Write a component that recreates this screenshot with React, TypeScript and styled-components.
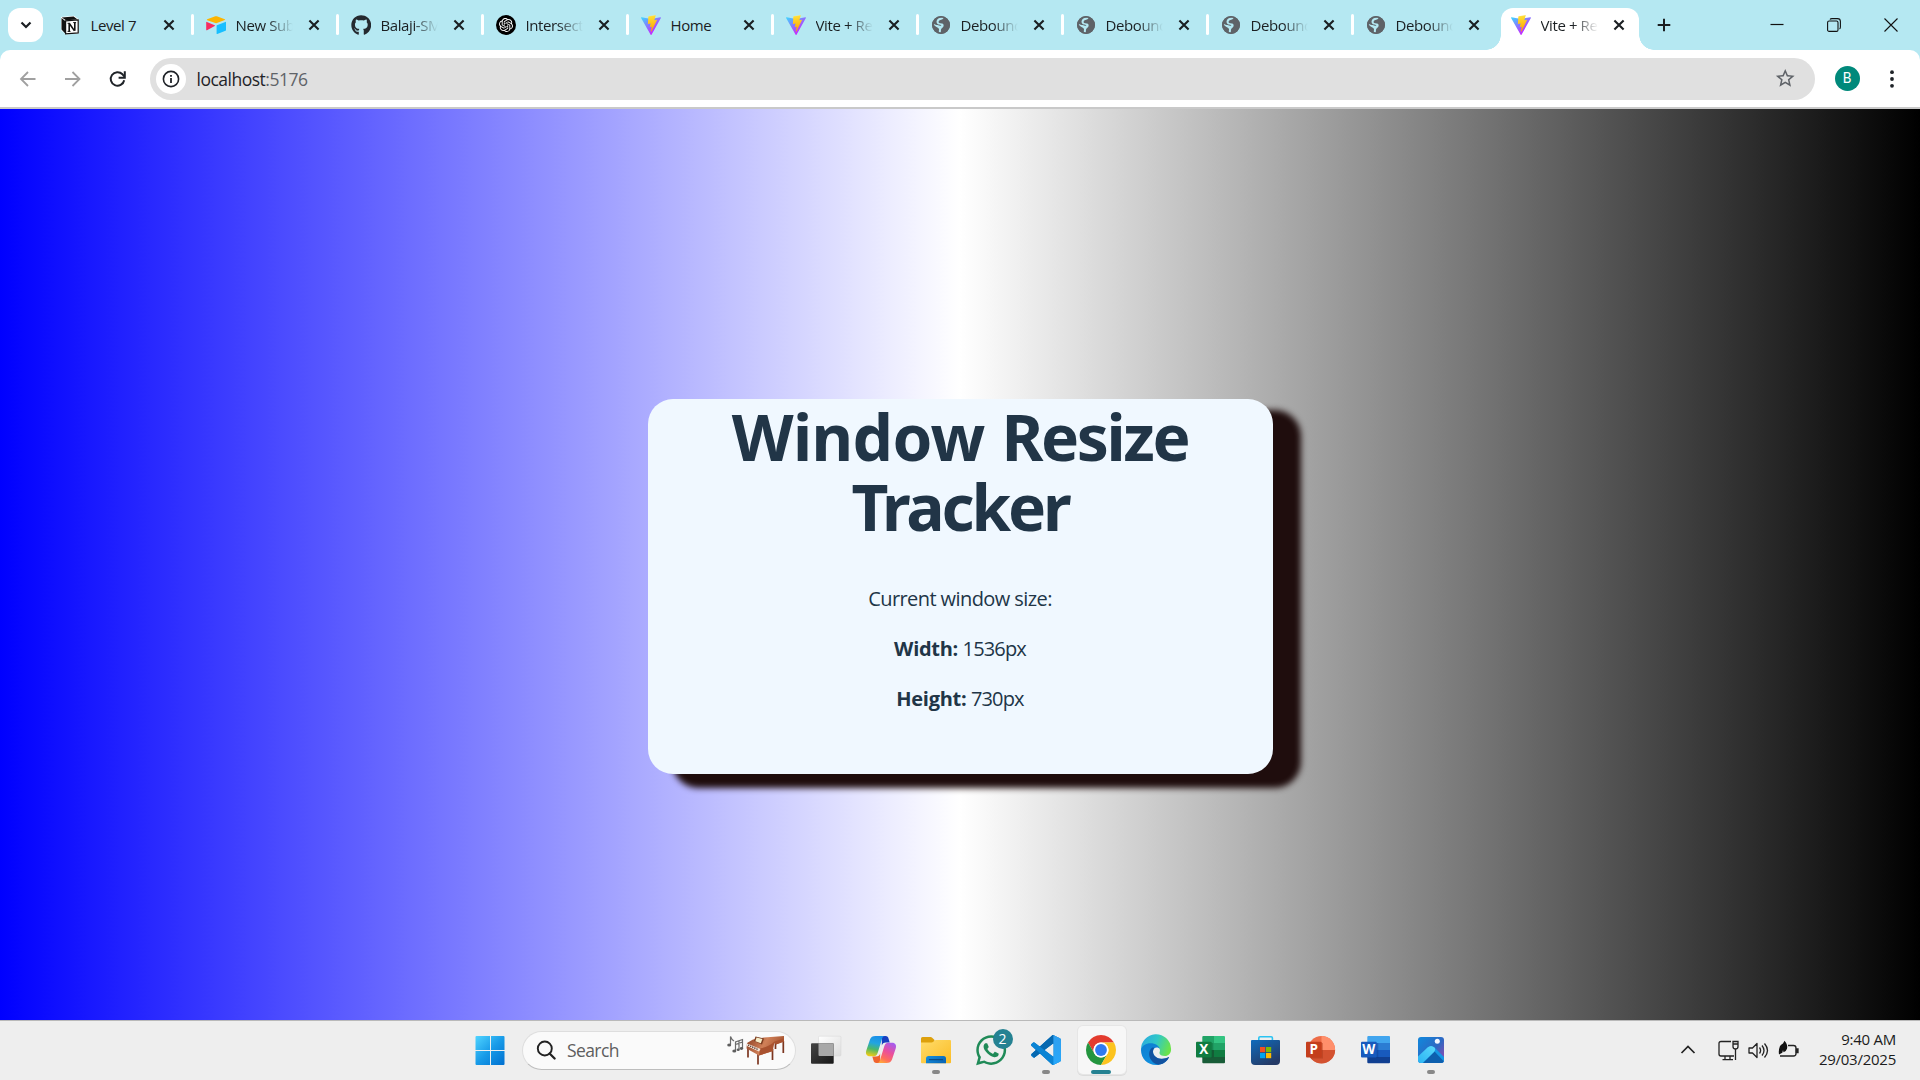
import React, { useId } from "react";
import styled, { createGlobalStyle, css } from "styled-components";
import { FaGithub, FaWhatsapp } from "react-icons/fa";
import { SiOpenai } from "react-icons/si";
import { MdStarBorder } from "react-icons/md";

const GlobalStyle = createGlobalStyle`
  *, *::before, *::after { box-sizing: border-box; }
  html, body { margin: 0; padding: 0; overflow: hidden; }
  body { font-family: "Open Sans", "Noto Sans", sans-serif; }
  svg { display: block; flex: none; }
`;

const Screen = styled.div`
  width: 1920px;
  height: 1080px;
  display: flex;
  flex-direction: column;
  overflow: hidden;
  background: #b5e8f2;
`;

/* ---------- Tab strip ---------- */

const TabStrip = styled.header`
  height: 50px;
  flex: none;
  display: flex;
  align-items: stretch;
  padding-left: 8px;
  background: #b5e8f2;
`;

const TabSearch = styled.button`
  width: 35px;
  height: 34px;
  margin: 8px 3px 0 0;
  padding: 0;
  border: 0;
  border-radius: 12px;
  background: #fff;
  display: grid;
  place-items: center;
`;

const Tab = styled.div<{ $active?: boolean; $first?: boolean }>`
  position: relative;
  z-index: 0;
  width: 145px;
  height: 50px;
  display: flex;
  align-items: center;
  padding-left: 14.5px;

  ${(p) =>
    !p.$active &&
    !p.$first &&
    css`
      &::before {
        content: "";
        position: absolute;
        left: 0;
        top: 14px;
        width: 2.5px;
        height: 21px;
        border-radius: 2px;
        background: #fff;
      }
    `}

  ${(p) =>
    p.$active &&
    css`
      &::before {
        content: "";
        position: absolute;
        z-index: -1;
        left: 5px;
        top: 7.5px;
        width: 138px;
        height: 43px;
        border-radius: 12px 12px 0 0;
        background: #fff;
      }
      &::after {
        content: "";
        position: absolute;
        z-index: -1;
        left: -10px;
        bottom: 0;
        width: 168px;
        height: 15px;
        background:
          radial-gradient(circle at 0 0, transparent 14.5px, #fff 15px) left / 15px 15px no-repeat,
          radial-gradient(circle at 15px 0, transparent 14.5px, #fff 15px) right / 15px 15px no-repeat;
      }
    `}
`;

const TabIcon = styled.span<{ $first?: boolean }>`
  width: 20px;
  height: 20px;
  margin-left: ${(p) => (p.$first ? -1 : 0)}px;
  margin-right: ${(p) => (p.$first ? 1 : 0)}px;
  display: grid;
  place-items: center;
`;

const TabTitle = styled.span<{ $fade?: boolean }>`
  width: 58px;
  margin-left: 10px;
  overflow: hidden;
  white-space: nowrap;
  font-size: 15px;
  line-height: 22px;
  letter-spacing: -0.4px;
  color: #1b2023;
  ${(p) => p.$fade && css`mask-image: linear-gradient(to right, #000 32px, transparent 57px);`}
`;

const TabClose = styled.button`
  width: 20px;
  height: 20px;
  margin-left: 10px;
  padding: 0;
  border: 0;
  background: none;
  display: grid;
  place-items: center;
`;

const NewTab = styled(TabClose)`
  width: 46px;
  height: 50px;
  margin-left: 0;
`;

const WindowControls = styled.div`
  margin-left: auto;
  padding-right: 1px;
  display: flex;
`;

const WindowButton = styled(TabClose)`
  width: 57px;
  height: 49px;
  margin-left: 0;
`;

/* ---------- Toolbar ---------- */

const Toolbar = styled.nav`
  height: 59px;
  flex: none;
  display: flex;
  align-items: center;
  padding: 0 5px;
  background: #fff;
  border-bottom: 2px solid #c9c9c9;
  border-radius: 10px 10px 0 0;
`;

const ToolButton = styled.button`
  width: 45px;
  height: 42px;
  padding: 0;
  border: 0;
  background: none;
  display: grid;
  place-items: center;
`;

const MenuButton = styled(ToolButton)`
  margin-left: 10px;
`;

const Omnibox = styled.div`
  width: 1665px;
  height: 42px;
  margin-left: 10px;
  padding: 0 18.5px 0 6px;
  border-radius: 21px;
  background: #e0e0e0;
  display: flex;
  align-items: center;
`;

const SiteInfo = styled.span`
  width: 30px;
  height: 30px;
  border-radius: 50%;
  background: #fff;
  display: grid;
  place-items: center;
`;

const Address = styled.span`
  margin-left: 10.5px;
  flex: 1;
  font-size: 17.5px;
  line-height: 26px;
  letter-spacing: -0.5px;
  color: #1f2328;
`;

const Port = styled.span`
  color: #5f6368;
`;

const Avatar = styled.span`
  width: 25px;
  height: 25px;
  margin-left: 19.5px;
  border-radius: 50%;
  background: #00897b;
  color: #fff;
  font: 14px/25px Roboto, sans-serif;
  text-align: center;
`;

/* ---------- Page ---------- */

const Page = styled.main`
  flex: 1;
  display: flex;
  justify-content: center;
  align-items: flex-start;
  padding-top: 290px;
  background: linear-gradient(to right, blue, white, black);
`;

const Card = styled.section`
  width: 625px;
  height: 375px;
  border-radius: 25px;
  background: aliceblue;
  box-shadow: 26px 12.5px 6.25px 1.25px #1f0d0d;
  color: #213547;
  text-align: center;
`;

const Heading = styled.h1`
  width: 500px;
  margin: 3px auto 0;
  font: bold 64px/70px "Noto Sans", "Open Sans", sans-serif;
`;

const Word = styled.span<{ $tracking: number }>`
  letter-spacing: ${(p) => p.$tracking}px;
`;

const Details = styled.div`
  padding-top: 42px;
`;

const Line = styled.p`
  margin: 0 0 20px;
  font-size: 20px;
  line-height: 30px;
  letter-spacing: -0.58px;
`;

const Label = styled.strong`
  letter-spacing: -0.3px;
`;

const Value = styled.span`
  letter-spacing: -0.85px;
`;

/* ---------- Taskbar ---------- */

const Taskbar = styled.footer`
  height: 60px;
  flex: none;
  display: flex;
  align-items: center;
  padding: 0 24px 1px 462px;
  border-top: 1px solid #b9b9b9;
  background: #eeeeee;
`;

const TaskCell = styled.div<{ $active?: boolean; $running?: boolean }>`
  position: relative;
  z-index: 0;
  width: 55px;
  height: 58px;
  display: grid;
  place-items: center;

  ${(p) =>
    p.$active &&
    css`
      &::before {
        content: "";
        position: absolute;
        z-index: -1;
        inset: 5px 3px 5px 4px;
        border-radius: 5px;
        background: #f7f7f7;
        box-shadow: 0 0 0 1px #e6e6e6, 0 1px 0 1px #dcdcdc;
      }
    `}

  ${(p) =>
    (p.$active || p.$running) &&
    css`
      &::after {
        content: "";
        position: absolute;
        bottom: 5px;
        left: 50%;
        width: ${p.$active ? 20 : 8}px;
        height: 4px;
        transform: translateX(-50%);
        border-radius: 2px;
        background: ${p.$active ? "#258292" : "#888"};
      }
    `}
`;

const Badge = styled.span`
  position: absolute;
  left: 29px;
  top: 8px;
  width: 20px;
  height: 20px;
  border-radius: 50%;
  background: #258292;
  color: #fff;
  font-size: 14px;
  line-height: 20px;
  text-align: center;
`;

const SearchBox = styled.div`
  width: 274px;
  height: 39px;
  margin: 0 2.500px 0 5px;
  padding: 0 9px 0 13px;
  display: flex;
  align-items: center;
  border: 1px solid #dedede;
  border-bottom-color: #bdbdbd;
  border-radius: 20px;
  background: #fafafa;
`;

const SearchText = styled.span`
  flex: 1;
  margin-left: 11px;
  font-size: 17.5px;
  line-height: 26px;
  letter-spacing: -0.6px;
  color: #5e5e5e;
`;

const Tray = styled.div`
  margin-left: auto;
  display: flex;
  align-items: center;
`;

const TrayIcons = styled.div`
  display: flex;
  gap: 9px;
  margin: 0 20px 0 22px;
`;

const Clock = styled.div`
  padding-bottom: 3px;
  text-align: right;
  font-size: 15px;
  line-height: 20px;
  letter-spacing: -0.25px;
  color: #1c1c1c;
  white-space: nowrap;
`;

/* ---------- Favicons ---------- */

const NotionIcon = () => (
  <svg width="20" height="20" viewBox="0 0 20 20">
    <path d="M1 2 14 .7l5 3.700v14L6 19.600 1 15z" fill="#fff" />
    <path d="M1.800 2.600 13.600 1.400l4 3L6 5.300zM1.500 3l3.700 3v12.500L1.500 14.600z" fill="#111" />
    <path d="M5.600 5.900 18.200 5v12.900L5.600 18.800z" fill="#fff" stroke="#111" strokeWidth="1.200" />
    <path d="M9.200 8.200v8.200M9.200 8.300l5.300 7.600M14.800 15.800V7.600" fill="none" stroke="#111" strokeWidth="1.600" />
    <path d="M7.600 8.300h2.200M7.600 16.400h2.900M13.200 7.600h2.900" stroke="#111" strokeWidth="1" />
  </svg>
);

const AirtableIcon = () => (
  <svg width="20" height="20" viewBox="0 0 20 20">
    <path d="M1.200 4.300 9.300 1.300q.8-.3 1.600 0l7.900 2.900q.8.500 0 .9l-7.900 3q-.8.300-1.600 0L1.200 5.200q-.8-.4 0-.9z" fill="#fcb400" />
    <path d="M10.900 10.200 19.300 6.900q.7-.2.700.5v7.700q0 .5-.5.700l-8.200 3.200q-.7.200-.7-.5v-7.600q0-.5.300-.7z" fill="#18bfff" />
    <path d="M.2 7.400q0-.7.700-.5l7.800 3.400q.6.400 0 .8L1 15.200q-.8.300-.8-.5z" fill="#f82b60" />
  </svg>
);

const ViteIcon = () => {
  const id = useId();
  return (
    <svg width="20" height="20" viewBox="0 0 256 257">
      <defs>
        <linearGradient id={`${id}v`} x1="0" x2="0.576" y1="0.07" y2="0.82">
          <stop offset="0" stopColor="#41d1ff" />
          <stop offset="1" stopColor="#bd34fe" />
        </linearGradient>
        <linearGradient id={`${id}b`} x1="0.43" x2="0.5" y1="0.02" y2="0.89">
          <stop offset="0" stopColor="#ffea83" />
          <stop offset="0.083" stopColor="#ffdd35" />
          <stop offset="1" stopColor="#ffa800" />
        </linearGradient>
      </defs>
      <path fill={`url(#${id}v)`} d="M255.153 37.938L134.897 252.976c-2.483 4.44-8.862 4.466-11.382.048L.875 37.958c-2.746-4.814 1.371-10.646 6.827-9.67l120.385 21.517a6.537 6.537 0 0 0 2.322-.004l117.867-21.483c5.438-.991 9.574 4.796 6.877 9.62Z" />
      <path fill={`url(#${id}b)`} d="M185.432.063L96.44 17.501a3.268 3.268 0 0 0-2.634 3.014l-5.474 92.456a3.268 3.268 0 0 0 3.997 3.378l24.777-5.718c2.318-.535 4.413 1.507 3.936 3.838l-7.361 36.047c-.495 2.426 1.782 4.5 4.151 3.78l15.304-4.649c2.372-.72 4.652 1.36 4.15 3.788l-11.698 56.621c-.732 3.542 3.979 5.473 5.943 2.437l1.313-2.028l72.516-144.72c1.215-2.423-.88-5.186-3.54-4.672l-25.505 4.922c-2.396.462-4.435-1.77-3.759-4.114l16.646-57.705c.677-2.35-1.37-4.583-3.769-4.113Z" />
    </svg>
  );
};

const OpenAIIcon = () => (
  <svg width="20" height="20" viewBox="0 0 20 20">
    <circle cx="10" cy="10" r="10" fill="#000" />
    <SiOpenai x="3" y="3" size={14} color="#fff" />
  </svg>
);

const GlobeIcon = () => (
  <svg width="20" height="20" viewBox="0 0 20 20">
    <circle cx="10" cy="10" r="9" fill="#5f6368" />
    <path
      d="M12.500 2.600C12.500 4.800 9.500 4.600 8.300 5.600 7 6.700 7.400 8.300 9.300 8.300 11.500 8.300 13 9 12.600 11 12.300 12.800 10.500 12.600 10 14.500L9.800 17.500 8 17.300C7.300 15.500 8.800 14.500 7.500 13.200 6.300 12.300 4 11.500 2.500 9.300 3.500 9 5 10 6.500 10 8 10 9.500 11.500 10.300 10.500 10.500 9.700 8 10 6.500 9 5 7.800 5.200 5 7.300 3.600 8.800 2.600 10.800 2.200 12.500 2.600z"
      fill="#b5e8f2"
    />
    <circle cx="10" cy="10" r="8.200" fill="none" stroke="#5f6368" strokeWidth="1.600" />
  </svg>
);
const GithubIcon = () => <FaGithub size={20.5} color="#24292f" />;

/* ---------- Browser glyphs ---------- */

const Cross = () => (
  <svg width="20" height="20" viewBox="0 0 20 20">
    <path d="M5.400 5.400l9.200 9.200M14.600 5.400l-9.200 9.200" stroke="#1b1f22" strokeWidth="2.100" />
  </svg>
);

const BackArrow = ({ flip = false }: { flip?: boolean }) => (
  <svg width="20" height="20" viewBox="0 0 20 20">
    <path
      d={flip ? "M2 10h14M9.500 3l7 7-7 7" : "M17.500 10h-14M10 3l-7 7 7 7"}
      fill="none"
      stroke="#a0a0a0"
      strokeWidth="1.800"
    />
  </svg>
);

const ReloadIcon = () => (
  <svg width="20" height="20" viewBox="0 0 20 20">
    <path d="M16.200 11.300A6.800 6.800 0 1 1 14.500 5.300L16.500 7.600" fill="none" stroke="#1f2328" strokeWidth="2" />
    <path d="M16.800 2.300v6.400h-6.200" fill="none" stroke="#1f2328" strokeWidth="2" />
  </svg>
);

const InfoIcon = () => (
  <svg width="20" height="20" viewBox="0 0 20 20">
    <circle cx="10" cy="10" r="7.600" fill="none" stroke="#1f2328" strokeWidth="1.600" />
    <path d="M10 9v5M10 6v1.800" stroke="#1f2328" strokeWidth="1.800" />
  </svg>
);

/* ---------- Taskbar icons ---------- */

const StartIcon = () => (
  <svg width="32" height="32" viewBox="0 0 32 32">
    <defs>
      <linearGradient id="start" gradientUnits="userSpaceOnUse" x1="2" y1="2" x2="30" y2="31">
        <stop offset="0" stopColor="#4fd3ff" />
        <stop offset="0.500" stopColor="#189be8" />
        <stop offset="1" stopColor="#0070d0" />
      </linearGradient>
    </defs>
    <path d="M2.500 2H16v14H1.500V3q0-1 1-1zM17 2h12.500q1 0 1 1v13H17zM1.500 17H16v14H2.500q-1 0-1-1zM17 17h13.500v13q0 1-1 1H17z" fill="url(#start)" />
  </svg>
);

const Magnifier = () => (
  <svg width="20" height="20" viewBox="0 0 20 20">
    <circle cx="8.800" cy="8.500" r="7" fill="none" stroke="#222" strokeWidth="1.900" />
    <path d="M13.600 13.500l5 5" stroke="#222" strokeWidth="2.300" strokeLinecap="round" />
  </svg>
);

const PianoArt = () => (
  <svg width="60" height="32" viewBox="0 0 60 32">
    <defs>
      <linearGradient id="wood" x1="0" y1="0" x2="1" y2="0.300">
        <stop offset="0" stopColor="#8a3d22" />
        <stop offset="0.550" stopColor="#d08058" />
        <stop offset="1" stopColor="#a5532f" />
      </linearGradient>
    </defs>
    <path d="M4.500 10.500V2.500q1 3 3.500 4.500M9.500 16.500V8l7-2.500v9M9.500 10.500l7-2.500M13 15.500V7" fill="none" stroke="#6b6b6b" strokeWidth="1.200" />
    <g fill="#5d5d5d">
      <ellipse cx="3.200" cy="11" rx="2" ry="1.600" />
      <ellipse cx="8.300" cy="17" rx="2" ry="1.600" />
      <ellipse cx="12.200" cy="15.800" rx="1.600" ry="1.300" />
      <ellipse cx="15.500" cy="14.500" rx="1.700" ry="1.400" />
    </g>
    <path d="M22 13v10.500M32 20v10.500M46.500 15v11M57.300 7v12M49.500 9v6" stroke="#7c3620" strokeWidth="1.700" />
    <path d="M21 9 27 5.500 38 3.500 58 2v5.500L50 10.500l-1-2q-2 2-2 8.500L33 21.500 20.500 14.500z" fill="url(#wood)" />
    <path d="M34 14.500Q43 13 48.500 7.500L58 4.500V7.500L50 10.500l-1-2q-2 2-2 8.500L33 21.500z" fill="#a9522f" />
    <path d="M21 9.500 34.500 15l-1.500 2.500-12-5.500z" fill="#f3e7dc" />
    <path d="M22 11l10.500 4.800" stroke="#40251c" strokeWidth="1.200" strokeDasharray="1.300 1" />
    <path d="M29.500 2.500 38 4.500l-2 6-8-3.500z" fill="#7a3b1f" />
    <path d="M30.500 3.500l5.900 1.500-1.600 4.200-5.400-2z" fill="#f7edc8" />
  </svg>
);

const TaskViewIcon = () => (
  <svg width="32" height="32" viewBox="0 0 32 32">
    <defs>
      <linearGradient id="tvd" x1="0" y1="0" x2="1" y2="1">
        <stop offset="0" stopColor="#454545" />
        <stop offset="1" stopColor="#171717" />
      </linearGradient>
      <linearGradient id="tvl" x1="0" y1="0" x2="1" y2="1">
        <stop offset="0" stopColor="#fff" />
        <stop offset="1" stopColor="#dcdcdc" />
      </linearGradient>
    </defs>
    <rect x="8.500" y="2.200" width="22.500" height="19.800" rx="1" fill="url(#tvl)" stroke="#d5d5d5" strokeWidth="0.500" />
    <rect x="1" y="9.300" width="22.700" height="20.500" rx="1" fill="url(#tvd)" />
    <path d="M8.500 9.300h14.200q1 0 1 1V22H9.500q-1 0-1-1z" fill="#a8a8a8" />
  </svg>
);

const CopilotIcon = () => (
  <svg width="32" height="32" viewBox="0 0 32 32">
    <defs>
      <linearGradient id="cpa" x1="0.500" y1="0" x2="0.300" y2="1">
        <stop offset="0" stopColor="#1a8fe8" />
        <stop offset="0.350" stopColor="#22a5e0" />
        <stop offset="0.650" stopColor="#4cb868" />
        <stop offset="1" stopColor="#f2cb14" />
      </linearGradient>
      <linearGradient id="cpb" x1="0.800" y1="0" x2="0.300" y2="1">
        <stop offset="0" stopColor="#a45cf0" />
        <stop offset="0.450" stopColor="#ea4f9c" />
        <stop offset="0.800" stopColor="#ff6e5a" />
        <stop offset="1" stopColor="#ffa43c" />
      </linearGradient>
    </defs>
    <path d="M17 2h3.500c2 0 2.600 1 3.100 2.700L24.700 8.500H21c-2.500 0-3.500 1-4.200 3z" fill="#173fc0" />
    <path d="M15 29h-3.500c-2 0-2.600-1-3.100-2.700L7.300 22.500H11c2.500 0 3.500-1 4.200-3z" fill="#f0632e" />
    <path d="M10.500 2H20c-2 0-2.600 1.500-3.200 3.500L12.800 18.500c-.9 2.800-2 3.700-4.300 3.700H5c-3.500 0-4.700-2.600-3.700-5.800L5 5.500C5.900 3 7.500 2 10.500 2z" fill="url(#cpa)" />
    <path d="M21.500 29H12c2 0 2.600-1.500 3.200-3.500L19.200 12.500c.9-2.800 2-3.700 4.300-3.700H27c3.500 0 4.700 2.600 3.700 5.800L27 25.500c-.9 2.500-2.500 3.500-5.500 3.500z" fill="url(#cpb)" />
  </svg>
);

const ExplorerIcon = () => (
  <svg width="32" height="32" viewBox="0 0 32 32">
    <defs>
      <linearGradient id="fold" x1="0" y1="0" x2="1" y2="1">
        <stop offset="0" stopColor="#ffdc6b" />
        <stop offset="1" stopColor="#fbbc25" />
      </linearGradient>
      <linearGradient id="foldb" x1="0" y1="0" x2="1" y2="0.500">
        <stop offset="0" stopColor="#1590e0" />
        <stop offset="1" stopColor="#0a68b8" />
      </linearGradient>
    </defs>
    <path d="M1 4.500Q1 3 2.500 3h8q1 0 1.700.8L14.500 6v6H1z" fill="#dda00c" />
    <path d="M1 8.500h10.500q1 0 1.800-.8l1-1q.7-.7 1.700-.7h14q1 0 1 1v21.300q0 1-1 1H2q-1 0-1-1z" fill="url(#fold)" />
    <path d="M6 29.300V24.500q0-2.500 2.500-2.500h15q2.500 0 2.500 2.500v4.800z" fill="url(#foldb)" />
    <path d="M9.500 25.700h13" stroke="#0b4b86" strokeWidth="1.300" strokeLinecap="round" />
  </svg>
);

const VSCODE =
  "M23.15 2.587L18.21.21a1.494 1.494 0 0 0-1.705.29l-9.46 8.63-4.12-3.128a.999.999 0 0 0-1.276.057L.327 7.261A1 1 0 0 0 .326 8.74L3.899 12 .326 15.26a1 1 0 0 0 .001 1.479L1.65 17.94a.999.999 0 0 0 1.276.057l4.12-3.128 9.46 8.63a1.492 1.492 0 0 0 1.704.29l4.942-2.377A1.5 1.5 0 0 0 24 20.06V3.939a1.5 1.5 0 0 0-.85-1.352zm-5.146 14.861L10.826 12l7.178-5.448v10.896z";

const VsCodeIcon = () => (
  <svg width="30" height="30" viewBox="0 0 24 24">
    <defs>
      <clipPath id="vsShape"><path d={VSCODE} clipRule="evenodd" /></clipPath>
      <linearGradient id="vsr" x1="0" y1="0" x2="0" y2="1">
        <stop offset="0" stopColor="#2f9fef" />
        <stop offset="1" stopColor="#27a8fb" />
      </linearGradient>
    </defs>
    <g clipPath="url(#vsShape)">
      <rect width="24" height="24" fill="#0a7fd0" />
      <path d="M0 15 17 0h1.500v6.500L3 19z" fill="#0668b0" />
      <path d="M0 7.500 2.300 5.500 18 17.500V24h-1.500z" fill="#0b84d4" />
      <path d="M17.900 0H24v24h-6.100z" fill="url(#vsr)" />
    </g>
  </svg>
);

const ChromeIcon = () => (
  <svg width="32" height="32" viewBox="0 0 32 32">
    <path d="M16 8.500h12.990A15 15 0 0 0 3.010 8.500L9.500 19.750A7.500 7.500 0 0 1 16 8.500z" fill="#e33b2e" />
    <path d="M3.010 8.500 9.500 19.750A7.500 7.500 0 0 0 22.500 19.750L16 31A15 15 0 0 1 3.010 8.500z" fill="#24953f" />
    <path d="M16 8.500h12.990A15 15 0 0 1 16 31l6.500-11.250A7.500 7.500 0 0 0 16 8.500z" fill="#fcc31e" />
    <circle cx="16" cy="16" r="7.500" fill="#fff" />
    <circle cx="16" cy="16" r="5.900" fill="#2f7af0" />
  </svg>
);

const EdgeIcon = () => (
  <svg width="32" height="32" viewBox="0 0 32 32">
    <defs>
      <linearGradient id="edg" x1="0" y1="0.200" x2="1" y2="0.500">
        <stop offset="0" stopColor="#2aa9e0" />
        <stop offset="0.500" stopColor="#30c8c8" />
        <stop offset="1" stopColor="#6be34a" />
      </linearGradient>
      <linearGradient id="edb" x1="0" y1="0" x2="0.500" y2="1">
        <stop offset="0" stopColor="#0d7ed0" />
        <stop offset="1" stopColor="#1190e0" />
      </linearGradient>
    </defs>
    <path d="M1 16A15 15 0 0 1 31 14.500C31.500 19 28.500 22 25 22 21.500 22 19 20.500 19.500 18.500 21 15 19 12 14 11z" fill="url(#edg)" />
    <path d="M1 16C2 11.500 6 9.300 10.500 9.300 15.500 9.300 19.500 12 20 15.500 18.500 12.500 13 13 13 17.500 13 24 21 27 28.500 24 26 28.500 21.500 31 16 31 7.500 31 1 24.500 1 16z" fill="url(#edb)" />
    <path d="M12.500 13.500C8.500 16 8 22 11.500 26.500 13.500 29.300 16.500 30.900 19.500 30.600 24 29.700 27.300 27 29 23.400 28.900 23 28.600 23 28 23.300 20 27 12.800 23 13 17.500 13 16 13.500 14.800 14.300 13.800z" fill="#1152a0" />
  </svg>
);

const Letter = styled.text`
  font: bold 13.5px "Open Sans", sans-serif;
  fill: #fff;
  text-anchor: middle;
`;

const ExcelIcon = () => (
  <svg width="32" height="32" viewBox="0 0 32 32">
    <path d="M7.300 3q0-1 1-1h10.700v14H7.300z" fill="#21a366" />
    <path d="M19 2h10q1 0 1 1v7H19z" fill="#33c481" />
    <path d="M19 9h11v7H19z" fill="#21a366" />
    <path d="M7.300 16H30v12.300q0 1-1 1H8.300q-1 0-1-1z" fill="#185c37" />
    <path d="M19 16h11v7H19z" fill="#107c41" />
    <path d="M7.300 9h11v15h-11z" fill="#0b5a30" opacity="0.400" />
    <rect x="1" y="7.700" width="15.700" height="15.700" rx="1" fill="#107c41" />
    <Letter x="8.800" y="20.400">X</Letter>
  </svg>
);

const StoreIcon = () => (
  <svg width="32" height="32" viewBox="0 0 32 32">
    <defs>
      <linearGradient id="store" x1="0" y1="0" x2="0.600" y2="1">
        <stop offset="0" stopColor="#0f6cbd" />
        <stop offset="1" stopColor="#243a66" />
      </linearGradient>
    </defs>
    <path d="M8.800 7.500V4q0-1.300 1.300-1.300h11q1.300 0 1.300 1.300v3.500" fill="none" stroke="#2bc3f2" strokeWidth="1.600" />
    <path d="M1 7q0-1 1-1h27q1 0 1 1v20q0 4-4 4H5q-4 0-4-4z" fill="url(#store)" />
    <rect x="10" y="13" width="5.200" height="5.200" fill="#f25022" />
    <rect x="16" y="13" width="5.200" height="5.200" fill="#7fba00" />
    <rect x="10" y="19" width="5.200" height="5.200" fill="#00a4ef" />
    <rect x="16" y="19" width="5.200" height="5.200" fill="#ffb900" />
  </svg>
);

const PowerPointIcon = () => (
  <svg width="32" height="32" viewBox="0 0 32 32">
    <circle cx="16.500" cy="15.700" r="13.600" fill="#ed6c47" />
    <path d="M16.500 2.100A13.600 13.600 0 0 1 30.100 16H16.500z" fill="#ff8f6b" />
    <path d="M2.900 16h27.200A13.600 13.600 0 0 1 2.900 16z" fill="#d35230" />
    <path d="M4 9h14v15.500H6z" fill="#a33417" opacity="0.400" />
    <rect x="1" y="7.700" width="15.700" height="15.700" rx="1" fill="#c43e1c" />
    <Letter x="8.800" y="20.400">P</Letter>
  </svg>
);

const WordIcon = () => (
  <svg width="32" height="32" viewBox="0 0 32 32">
    <path d="M7.300 3q0-1 1-1H29q1 0 1 1v6H7.300z" fill="#41a5ee" />
    <path d="M7.300 9H30v7H7.300z" fill="#2b7cd3" />
    <path d="M7.300 16H30v7H7.300z" fill="#185abd" />
    <path d="M7.300 23H30v5.300q0 1-1 1H8.300q-1 0-1-1z" fill="#103f91" />
    <path d="M7.300 9h11v15h-11z" fill="#0c3580" opacity="0.350" />
    <rect x="1" y="7.700" width="15.700" height="15.700" rx="1" fill="#185abd" />
    <Letter x="8.800" y="20.400">W</Letter>
  </svg>
);

const PhotosIcon = () => (
  <svg width="32" height="32" viewBox="0 0 32 32">
    <defs>
      <linearGradient id="phbg" x1="0.200" y1="0" x2="1" y2="0.700">
        <stop offset="0" stopColor="#1583d8" />
        <stop offset="0.600" stopColor="#2e67c2" />
        <stop offset="1" stopColor="#7e4fb4" />
      </linearGradient>
      <linearGradient id="phm" x1="0" y1="1" x2="1" y2="0">
        <stop offset="0" stopColor="#2ab3f3" />
        <stop offset="1" stopColor="#5ad8fb" />
      </linearGradient>
      <clipPath id="phc"><rect x="3" y="3" width="26" height="26" rx="3" /></clipPath>
    </defs>
    <g clipPath="url(#phc)">
      <rect x="3" y="3" width="26" height="26" fill="url(#phbg)" />
      <path d="M12.500 13.500q3.500-3 7 0L30 24v6H3z" fill="#1496e4" />
      <path d="M8 29 19.500 17.500 30 28.500V30H8z" fill="#0d5fae" />
      <path d="M3 22.500 12.500 13.500q3.500-3 7 0 1.500 2-.5 4.500L7.500 29H3z" fill="url(#phm)" />
      <circle cx="22.300" cy="7.300" r="2.500" fill="#f2f6ff" />
    </g>
  </svg>
);

/* ---------- Data ---------- */

const tabs: { title: string; icon: React.ReactNode; fade?: boolean }[] = [
  { title: "Level 7", icon: <NotionIcon /> },
  { title: "New Sub", icon: <AirtableIcon />, fade: true },
  { title: "Balaji-SM", icon: <GithubIcon />, fade: true },
  { title: "Intersect", icon: <OpenAIIcon />, fade: true },
  { title: "Home", icon: <ViteIcon /> },
  { title: "Vite + Re", icon: <ViteIcon />, fade: true },
  { title: "Debounc", icon: <GlobeIcon />, fade: true },
  { title: "Debounc", icon: <GlobeIcon />, fade: true },
  { title: "Debounc", icon: <GlobeIcon />, fade: true },
  { title: "Debounc", icon: <GlobeIcon />, fade: true },
  { title: "Vite + Re", icon: <ViteIcon />, fade: true },
];

const apps: { name: string; icon: React.ReactNode; running?: boolean; active?: boolean; badge?: number }[] = [
  { name: "taskview", icon: <TaskViewIcon /> },
  { name: "copilot", icon: <CopilotIcon /> },
  { name: "explorer", icon: <ExplorerIcon />, running: true },
  { name: "whatsapp", icon: <FaWhatsapp size={34.3} color="#1f8a57" />, badge: 2 },
  { name: "vscode", icon: <VsCodeIcon />, running: true },
  { name: "chrome", icon: <ChromeIcon />, active: true },
  { name: "edge", icon: <EdgeIcon /> },
  { name: "excel", icon: <ExcelIcon /> },
  { name: "store", icon: <StoreIcon /> },
  { name: "powerpoint", icon: <PowerPointIcon /> },
  { name: "word", icon: <WordIcon /> },
  { name: "photos", icon: <PhotosIcon />, running: true },
];

export default function App() {
  return (
    <Screen>
      <GlobalStyle />
      <TabStrip>
        <TabSearch>
          <svg width="14" height="14" viewBox="0 0 14 14">
            <path d="M2.500 4.500 7 9l4.500-4.500" fill="none" stroke="#1b1f22" strokeWidth="2.200" />
          </svg>
        </TabSearch>
        {tabs.map((tab, i) => (
          <Tab key={i} $first={i === 0} $active={i === tabs.length - 1}>
            <TabIcon $first={i === 0}>{tab.icon}</TabIcon>
            <TabTitle $fade={tab.fade}>{tab.title}</TabTitle>
            <TabClose><Cross /></TabClose>
          </Tab>
        ))}
        <NewTab>
          <svg width="16" height="16" viewBox="0 0 16 16">
            <path d="M8 1.700v12.600M1.700 8h12.600" stroke="#1b1f22" strokeWidth="2" />
          </svg>
        </NewTab>
        <WindowControls>
          <WindowButton>
            <svg width="14" height="14" viewBox="0 0 14 14">
              <path d="M.5 6.500h13" stroke="#111" strokeWidth="1.200" />
            </svg>
          </WindowButton>
          <WindowButton>
            <svg width="14" height="14" viewBox="0 0 14 14">
              <rect x="0.600" y="3" width="10.400" height="10.400" rx="1.500" fill="none" stroke="#111" strokeWidth="1.100" />
              <path d="M3 1.500Q3.500.6 5 .6h5.500q2.900 0 2.900 2.900V9q0 1.500-.9 2" fill="none" stroke="#111" strokeWidth="1.100" />
            </svg>
          </WindowButton>
          <WindowButton>
            <svg width="14" height="14" viewBox="0 0 14 14">
              <path d="M.5.5l13 13M13.500.5l-13 13" stroke="#111" strokeWidth="1.100" />
            </svg>
          </WindowButton>
        </WindowControls>
      </TabStrip>

      <Toolbar>
        <ToolButton><BackArrow /></ToolButton>
        <ToolButton><BackArrow flip /></ToolButton>
        <ToolButton><ReloadIcon /></ToolButton>
        <Omnibox>
          <SiteInfo><InfoIcon /></SiteInfo>
          <Address>localhost<Port>:5176</Port></Address>
          <MdStarBorder size={22.5} color="#5f6368" />
        </Omnibox>
        <Avatar>B</Avatar>
        <MenuButton>
          <svg width="20" height="20" viewBox="0 0 20 20" fill="#1f2328">
            <circle cx="10" cy="3.200" r="1.900" />
            <circle cx="10" cy="10" r="1.900" />
            <circle cx="10" cy="16.800" r="1.900" />
          </svg>
        </MenuButton>
      </Toolbar>

      <Page>
        <Card>
          <Heading>
            <Word $tracking={-0.6}>Window</Word> <Word $tracking={-2.4}>Resize</Word>{" "}
            <Word $tracking={-3.1}>Tracker</Word>
          </Heading>
          <Details>
            <Line>Current window size:</Line>
            <Line><Label>Width:</Label> <Value>1536px</Value></Line>
            <Line><Label>Height:</Label> <Value>730px</Value></Line>
          </Details>
        </Card>
      </Page>

      <Taskbar>
        <TaskCell><StartIcon /></TaskCell>
        <SearchBox>
          <Magnifier />
          <SearchText>Search</SearchText>
          <PianoArt />
        </SearchBox>
        {apps.map((app) => (
          <TaskCell key={app.name} $running={app.running} $active={app.active}>
            {app.icon}
            {app.badge && <Badge>{app.badge}</Badge>}
          </TaskCell>
        ))}
        <Tray>
          <svg width="16" height="16" viewBox="0 0 16 16">
            <path d="M1.500 11 8 4.500 14.500 11" fill="none" stroke="#222" strokeWidth="1.700" />
          </svg>
          <TrayIcons>
            <svg width="21" height="21" viewBox="0 0 21 21" fill="none" stroke="#222" strokeWidth="1.300">
              <path d="M13 1.500H3Q1 1.500 1 3.500V14q0 2 2 2h13M7 16v3.500M12 16v3.500M4.500 19.700h10.500M15 1.500h5v5q0 2.500-2.500 2.500T15 6.500zM15 4h5M17.500 9v11" />
            </svg>
            <svg width="21" height="21" viewBox="0 0 21 21" fill="none" stroke="#222" strokeWidth="1.300" strokeLinejoin="round">
              <path d="M1 8h3.500l4.500-4.500v14L4.500 13H1zM11.500 7.500q2.200 3 0 6M14 5.500q4 5 0 10M16.500 3.500q6 7 0 14" />
            </svg>
            <svg width="21" height="21" viewBox="0 0 21 21" fill="none" stroke="#222" strokeWidth="1.300">
              <path d="M10 5.500h5.500q2.500 0 2.500 2.500v5.500q0 2.500-2.500 2.500H2" />
              <path d="M18.300 9h1.700v3.500h-1.700z" fill="#222" />
              <path d="M6.500.8q3.500 4 2.500 8-1 3-3.500 3.500L5 10l-.7 2.700L1 14.500Q.3 9 2 6q1.500-2 3-2.500z" fill="#111" stroke="none" />
            </svg>
          </TrayIcons>
          <Clock>
            <div>9:40 AM</div>
            <div>29/03/2025</div>
          </Clock>
        </Tray>
      </Taskbar>
    </Screen>
  );
}
